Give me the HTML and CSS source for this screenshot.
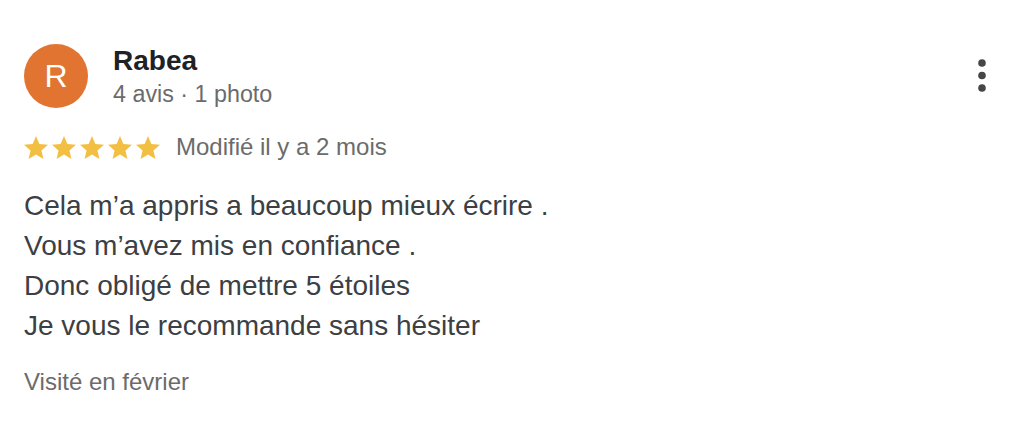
FILE: index.html
```html
<!DOCTYPE html>
<html lang="fr">
<head>
<meta charset="utf-8">
<link rel="stylesheet" href="styles.css">
</head>
<body>
<div class="review">
  <div class="header">
    <div class="avatar">R</div>
    <div class="who">
      <div class="name">Rabea</div>
      <div class="meta">4 avis · 1 photo</div>
    </div>
    <div class="more">
      <svg width="12" height="36" viewBox="0 0 12 36"><circle cx="6" cy="6" r="3.8" fill="#444746"/><circle cx="6" cy="18.5" r="3.8" fill="#444746"/><circle cx="6" cy="31" r="3.8" fill="#444746"/></svg>
    </div>
  </div>
  <div class="rating">
    <div class="stars">
      <svg class="star" viewBox="2 2 20 19"><path d="M12 17.27L18.18 21l-1.64-7.03L22 9.24l-7.19-.61L12 2 9.19 8.63 2 9.24l5.46 4.73L5.82 21z"/></svg>
      <svg class="star" viewBox="2 2 20 19"><path d="M12 17.27L18.18 21l-1.64-7.03L22 9.24l-7.19-.61L12 2 9.19 8.63 2 9.24l5.46 4.73L5.82 21z"/></svg>
      <svg class="star" viewBox="2 2 20 19"><path d="M12 17.27L18.18 21l-1.64-7.03L22 9.24l-7.19-.61L12 2 9.19 8.63 2 9.24l5.46 4.73L5.82 21z"/></svg>
      <svg class="star" viewBox="2 2 20 19"><path d="M12 17.27L18.18 21l-1.64-7.03L22 9.24l-7.19-.61L12 2 9.19 8.63 2 9.24l5.46 4.73L5.82 21z"/></svg>
      <svg class="star" viewBox="2 2 20 19"><path d="M12 17.27L18.18 21l-1.64-7.03L22 9.24l-7.19-.61L12 2 9.19 8.63 2 9.24l5.46 4.73L5.82 21z"/></svg>
    </div>
    <span class="date">Modifié il y a 2 mois</span>
  </div>
  <div class="body">
    <p>Cela m’a appris a beaucoup mieux écrire .</p>
    <p>Vous m’avez mis en confiance .</p>
    <p>Donc obligé de mettre 5 étoiles</p>
    <p>Je vous le recommande sans hésiter</p>
  </div>
  <div class="visit">Visité en février</div>
</div>
</body>
</html>
```
FILE: styles.css
```css
html, body {
  margin: 0;
  padding: 0;
  background: #ffffff;
}
body {
  font-family: "Liberation Sans", Arial, Helvetica, sans-serif;
  width: 1030px;
  height: 422px;
  overflow: hidden;
}
.review {
  padding: 44px 24px 0 24px;
}
.header {
  display: flex;
  align-items: flex-start;
}
.avatar {
  width: 64px;
  height: 64px;
  border-radius: 50%;
  background: #e07430;
  color: #ffffff;
  font-size: 32px;
  line-height: 64px;
  text-align: center;
  flex-shrink: 0;
}
.who {
  margin-left: 25px;
  flex: 1;
}
.name {
  font-size: 28px;
  font-weight: bold;
  color: #202124;
  line-height: 34px;
}
.meta {
  font-size: 23.3px;
  color: #6b6b6b;
  line-height: 30px;
  margin-top: 1px;
}
.more {
  margin-top: 13px;
  margin-right: 18px;
  line-height: 0;
}
.rating {
  display: flex;
  align-items: center;
  margin-top: 23px;
  height: 30px;
}
.stars {
  display: flex;
  gap: 4px;
}
.star {
  width: 24px;
  height: 23px;
  fill: #f3bf43;
}
.date {
  margin-left: 16px;
  font-size: 24px;
  line-height: 30px;
  color: #6b6b6b;
}
.body {
  margin-top: 24px;
  color: #3c4043;
  font-size: 28px;
  line-height: 40px;
}
.body p {
  margin: 0;
}
.visit {
  margin-top: 21px;
  font-size: 24px;
  line-height: 30px;
  color: #6b6b6b;
}
```
